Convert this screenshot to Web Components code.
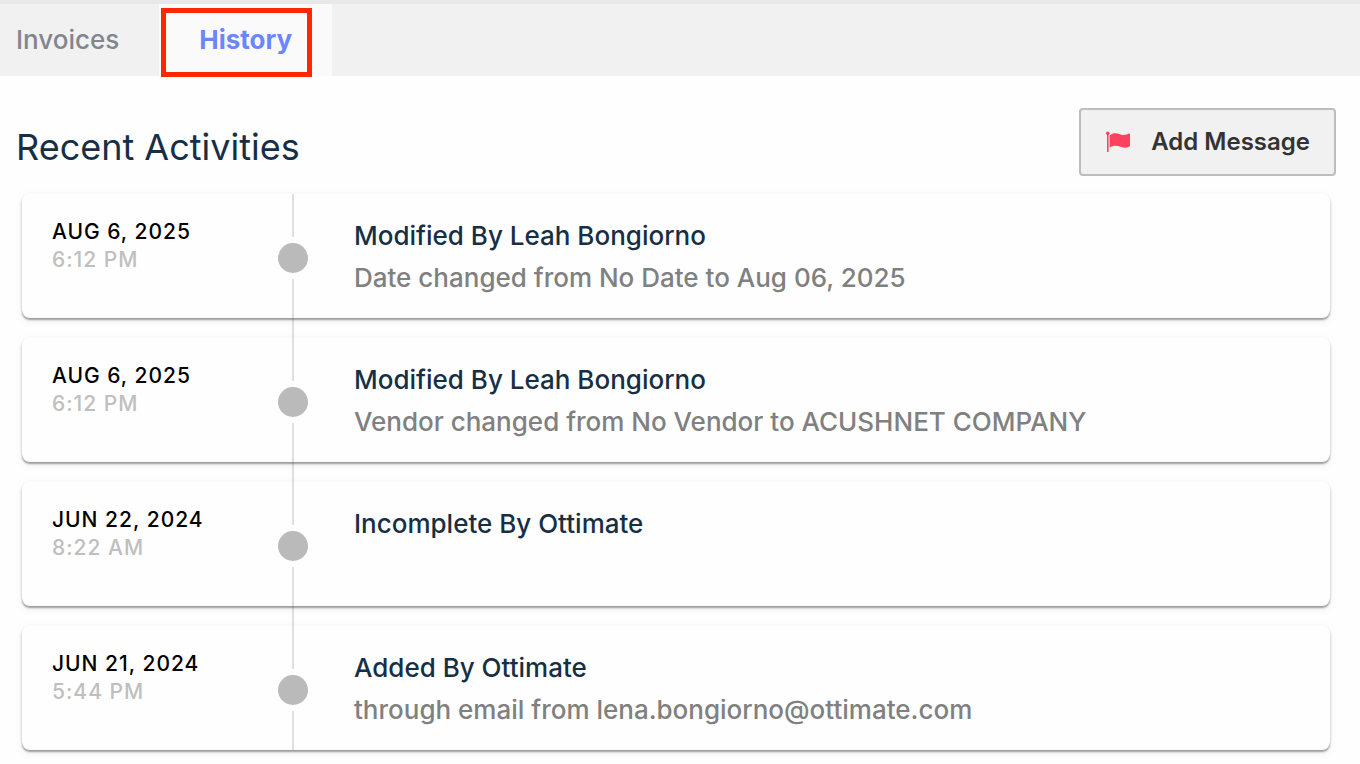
<!DOCTYPE html>
<html lang="en">
<head>
  <meta charset="utf-8">
  <meta name="viewport" content="width=device-width, initial-scale=1">
  <title>History</title>
  <style>
    body {
      margin: 0;
      background: #fefefe;
      font-family: Inter, "Liberation Sans", sans-serif;
    }
  </style>
</head>
<body>
  <history-page></history-page>

  <script>
    class TabItem extends HTMLElement {
      constructor () {
        super()
        this.shadow = this.attachShadow({ mode: 'open' })
      }

      connectedCallback () {
        this.render()
      }

      render () {
        this.shadow.innerHTML =
        /* html */`
          <style>
            * {
              box-sizing: border-box;
              margin: 0;
              padding: 0;
            }

            :host {
              display: block;
            }

            a {
              display: block;
              height: 72px;
              padding: 0 40px 0 16px;
              color: #82858e;
              font-size: 26px;
              font-weight: 500;
              line-height: 72px;
              text-decoration: none;
            }

            :host([active]) a {
              position: relative;
              padding: 0 40px;
              background: #fafafa;
              color: #6b87ff;
              font-weight: 700;
            }

            /* highlight frame over the active tab */
            :host([active]) a::after {
              content: "";
              position: absolute;
              inset: 4px 20px -1px 2px;
              border: 5px solid #ff2600;
              pointer-events: none;
            }
          </style>

          <a href="#"><slot></slot></a>
        `
      }
    }

    customElements.define('tab-item', TabItem)

    class TabBar extends HTMLElement {
      constructor () {
        super()
        this.shadow = this.attachShadow({ mode: 'open' })
      }

      connectedCallback () {
        this.render()
      }

      render () {
        this.shadow.innerHTML =
        /* html */`
          <style>
            :host {
              display: block;
            }

            nav {
              display: flex;
              border-top: 4px solid #e8e8e8;
              background: #f1f1f1;
            }
          </style>

          <nav><slot></slot></nav>
        `
      }
    }

    customElements.define('tab-bar', TabBar)

    class MessageButton extends HTMLElement {
      constructor () {
        super()
        this.shadow = this.attachShadow({ mode: 'open' })
      }

      connectedCallback () {
        this.render()
      }

      render () {
        this.shadow.innerHTML =
        /* html */`
          <style>
            :host {
              display: block;
            }

            button {
              display: flex;
              align-items: center;
              gap: 20px;
              height: 68px;
              padding: 0 24px;
              border: 2px solid #bdbdbd;
              border-radius: 4px;
              background: #f1f1f1;
              color: #333;
              font-family: inherit;
              font-size: 24px;
              font-weight: 600;
              line-height: 32px;
              cursor: pointer;
            }

            svg {
              width: 26px;
              height: 24px;
              fill: #ff4160;
            }
          </style>

          <button type="button">
            <svg viewBox="0 0 26 24" aria-hidden="true">
              <circle cx="2.8" cy="3.2" r="1.8"/>
              <rect x="2" y="3" width="1.6" height="19"/>
              <path d="M4.6 5.2C8 2.8 11.2 2.6 15 4.2C18.5 5.6 21.2 5.2 24 3.6Q25 3 25 4V15.4Q25 16.1 24.4 16.4C21.2 18.1 18.2 17.9 14.8 16.6C11 15.2 8 15.5 4.6 17.6Z"/>
            </svg>
            <slot></slot>
          </button>
        `
      }
    }

    customElements.define('message-button', MessageButton)

    class ActivityItem extends HTMLElement {
      constructor () {
        super()
        this.shadow = this.attachShadow({ mode: 'open' })
      }

      connectedCallback () {
        this.render()
      }

      render () {
        this.shadow.innerHTML =
        /* html */`
          <style>
            * {
              box-sizing: border-box;
              margin: 0;
              padding: 0;
            }

            :host {
              display: block;
            }

            article {
              display: grid;
              grid-template-columns: 256px 30px 1fr;
              min-height: 124px;
              border-radius: 8px;
              background: #fefefe;
              box-shadow: 0 2px 2px rgba(0, 0, 0, 0.36), 0 2px 8px rgba(0, 0, 0, 0.08);
            }

            .when {
              padding: 24px 0 0 30px;
              font-size: 21px;
              font-weight: 500;
              line-height: 28px;
              letter-spacing: 1px;
              text-transform: uppercase;
            }

            .date {
              color: #000;
            }

            .time {
              color: #bfbfbf;
            }

            /* the rail runs on through the gap to the next card */
            .rail {
              display: flex;
              flex-direction: column;
              align-items: center;
              gap: 6px;
              margin-bottom: -20px;
            }

            :host(:last-of-type) .rail {
              margin-bottom: 0;
            }

            .rail::before,
            .rail::after {
              content: "";
              width: 2px;
              background: rgba(0, 0, 0, 0.12);
            }

            .rail::before {
              height: 43px;
            }

            .rail::after {
              flex: 1;
            }

            .dot {
              width: 30px;
              height: 30px;
              border-radius: 50%;
              background: #bababa;
            }

            .what {
              padding: 24px 24px 16px 46px;
              font-size: 26px;
              font-weight: 500;
            }

            h2 {
              color: #172f45;
              font-size: 26px;
              font-weight: 500;
              line-height: 36px;
            }

            p {
              margin-top: 6px;
              color: #808080;
              line-height: 36px;
            }
          </style>

          <article>
            <div class="when">
              <div class="date">${this.getAttribute('date')}</div>
              <div class="time">${this.getAttribute('time')}</div>
            </div>
            <div class="rail"><span class="dot"></span></div>
            <div class="what">
              <h2>${this.getAttribute('heading')}</h2>
              <p><slot></slot></p>
            </div>
          </article>
        `
      }
    }

    customElements.define('activity-item', ActivityItem)

    class HistoryPage extends HTMLElement {
      constructor () {
        super()
        this.shadow = this.attachShadow({ mode: 'open' })
      }

      connectedCallback () {
        this.render()
      }

      render () {
        this.shadow.innerHTML =
        /* html */`
          <style>
            * {
              box-sizing: border-box;
              margin: 0;
              padding: 0;
            }

            :host {
              display: block;
            }

            header {
              display: flex;
              align-items: center;
              justify-content: space-between;
              padding: 32px 24px 18px 16px;
            }

            h1 {
              padding-top: 10px;
              color: #172f45;
              font-size: 36px;
              font-weight: 400;
              line-height: 48px;
            }

            .activities {
              display: flex;
              flex-direction: column;
              gap: 20px;
              padding: 0 30px 14px 22px;
            }
          </style>

          <tab-bar>
            <tab-item>Invoices</tab-item>
            <tab-item active>History</tab-item>
          </tab-bar>
          <main>
            <header>
              <h1>Recent Activities</h1>
              <message-button>Add Message</message-button>
            </header>
            <section class="activities">
              <activity-item date="Aug 6, 2025" time="6:12 PM" heading="Modified By Leah Bongiorno">Date changed from No Date to Aug 06, 2025</activity-item>
              <activity-item date="Aug 6, 2025" time="6:12 PM" heading="Modified By Leah Bongiorno">Vendor changed from No Vendor to ACUSHNET COMPANY</activity-item>
              <activity-item date="Jun 22, 2024" time="8:22 AM" heading="Incomplete By Ottimate"></activity-item>
              <activity-item date="Jun 21, 2024" time="5:44 PM" heading="Added By Ottimate">through email from lena.bongiorno@ottimate.com</activity-item>
            </section>
          </main>
        `
      }
    }

    customElements.define('history-page', HistoryPage)
  </script>
</body>
</html>
